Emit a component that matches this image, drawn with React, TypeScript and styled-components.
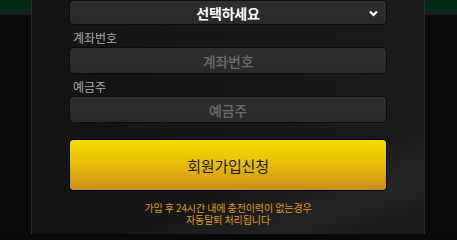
import styled, { createGlobalStyle } from 'styled-components'

const GlobalStyle = createGlobalStyle`
  html, body {
    margin: 0;
    padding: 0;
    background: #090909;
  }
  body {
    font-family: "Noto Sans CJK KR", "Noto Sans", sans-serif;
  }
`

const Page = styled.div`
  width: 457px;
  height: 234px;
  overflow: hidden;
  display: flex;
  background: linear-gradient(
    to bottom,
    #052a16 0,
    #052a16 13px,
    #1b1b1b 13px,
    #1b1b1b 15px,
    #0b0b0b 15px
  );
`

const Modal = styled.div`
  box-sizing: border-box;
  margin-left: 31px;
  width: 394px;
  height: 234px;
  padding: 0 37px;
  display: flex;
  flex-direction: column;
  border-left: 1px solid #2c2c2c;
  border-right: 1px solid #2c2c2c;
  background:
    linear-gradient(160deg, rgba(0, 0, 0, 0) 70%, rgba(255, 255, 255, 0.05) 85%, rgba(0, 0, 0, 0) 95%),
    linear-gradient(to right, rgba(20, 20, 20, 0.92), rgba(28, 28, 28, 0.92));
`

const Field = styled.div<{ $bold?: boolean }>`
  position: relative;
  box-sizing: border-box;
  height: 27px;
  display: flex;
  align-items: center;
  justify-content: center;
  border: 1px solid #0c0c0c;
  border-radius: 4px;
  background: linear-gradient(to bottom, #2f2f2f, #292929);
  font-size: 14px;
  font-weight: ${({ $bold }) => ($bold ? 700 : 500)};
  color: ${({ $bold }) => ($bold ? '#ffffff' : '#6c6c6c')};
  letter-spacing: -0.2px;
`

const SelectField = styled(Field)`
  height: 25px;
`

const Chevron = styled.svg`
  position: absolute;
  right: 8px;
  top: 9px;
`

const Label = styled.div<{ $top: number }>`
  margin-top: ${({ $top }) => $top}px;
  padding-left: 4px;
  height: 17px;
  line-height: 17px;
  font-size: 12px;
  color: #a8a8a8;
`

const InputGap = styled.div`
  height: 1px;
`

const SubmitButton = styled.button`
  box-sizing: border-box;
  margin-top: 16px;
  height: 52px;
  width: 100%;
  border: 1px solid #050505;
  border-radius: 4px;
  background: linear-gradient(to bottom, #f7de02 0%, #e6bb0a 50%, #cb8c1d 100%);
  font-family: inherit;
  font-size: 15px;
  color: #1e1a0c;
  letter-spacing: -0.2px;
  cursor: pointer;
`

const Notice = styled.div`
  margin-top: 11px;
  display: flex;
  flex-direction: column;
  align-items: center;
  font-size: 10px;
  color: #de9a1d;
  letter-spacing: -0.1px;
`

const NoticeLine = styled.span`
  display: block;
  height: 11px;
  line-height: 11px;
  margin-bottom: 1px;
`

export default function App() {
  return (
    <>
      <GlobalStyle />
      <Page>
        <Modal>
          <SelectField $bold>
            선택하세요
            <Chevron width="9" height="7" viewBox="0 0 9 7">
              <path d="M1 1.5 L4.5 5 L8 1.5" fill="none" stroke="#ffffff" strokeWidth="2.2" />
            </Chevron>
          </SelectField>
          <Label $top={4}>계좌번호</Label>
          <InputGap />
          <Field>계좌번호</Field>
          <Label $top={4}>예금주</Label>
          <InputGap />
          <Field>예금주</Field>
          <SubmitButton type="button">회원가입신청</SubmitButton>
          <Notice>
            <NoticeLine>가입 후 24시간 내에 충전이력이 없는경우</NoticeLine>
            <NoticeLine>자동탈퇴 처리됩니다</NoticeLine>
          </Notice>
        </Modal>
      </Page>
    </>
  )
}
